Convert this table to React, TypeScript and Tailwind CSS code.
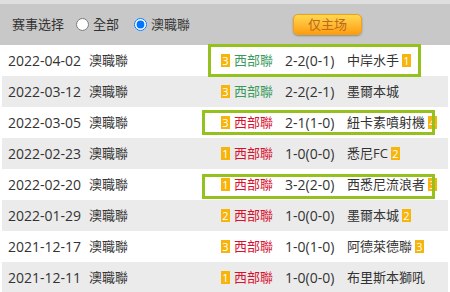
type Match = {
    date: string
    homeRank: string
    homeColor: string
    score: string
    away: string
    awayRank?: string
    box?: string
}

const matches: Match[] = [
    { date: '2022-04-02', homeRank: '3', homeColor: 'text-[#3a9a5c]', score: '2-2(0-1)', away: '中岸水手', awayRank: '1', box: 'left-[-13px] top-[-1px] w-[213px] h-[33px]' },
    { date: '2022-03-12', homeRank: '3', homeColor: 'text-[#3a9a5c]', score: '2-2(2-1)', away: '墨爾本城' },
    { date: '2022-03-05', homeRank: '3', homeColor: 'text-[#d8112f]', score: '2-1(1-0)', away: '紐卡素噴射機', awayRank: '4', box: 'left-[-19px] top-[3px] w-[233px] h-[25px]' },
    { date: '2022-02-23', homeRank: '1', homeColor: 'text-[#d8112f]', score: '1-0(0-0)', away: '悉尼FC', awayRank: '2' },
    { date: '2022-02-20', homeRank: '1', homeColor: 'text-[#d8112f]', score: '3-2(2-0)', away: '西悉尼流浪者', awayRank: '3', box: 'left-[-19px] top-[5px] w-[233px] h-[25px]' },
    { date: '2022-01-29', homeRank: '2', homeColor: 'text-[#d8112f]', score: '1-0(0-0)', away: '墨爾本城', awayRank: '2' },
    { date: '2021-12-17', homeRank: '3', homeColor: 'text-[#d8112f]', score: '1-0(1-0)', away: '阿德萊德聯', awayRank: '3' },
    { date: '2021-12-11', homeRank: '1', homeColor: 'text-[#d8112f]', score: '1-0(0-0)', away: '布里斯本獅吼' },
]

const Badge = ({ n, className = '' }: { n: string; className?: string }) => (
    <span className={`flex w-[9px] h-[13px] items-center justify-center bg-[#f7b40a] text-white text-[11px] leading-none ${className}`}>
        {n}
    </span>
)

const Row = ({ m, i }: { m: Match; i: number }) => (
    <div className={`flex h-[31px] items-center mx-[2px] ${i % 2 === 1 ? 'bg-[#ebebeb]' : 'bg-white'}`}>
        <div className="w-[87px] pl-[6px] text-[14px]">{m.date}</div>
        <div className="w-[132px]">澳職聯</div>
        <div className="relative flex self-stretch items-center">
            {m.box && <div className={`absolute border-[3px] border-[#95c11f] ${m.box}`} />}
            <Badge n={m.homeRank} />
            <span className={`ml-[4px] w-[39px] ${m.homeColor}`}>西部聯</span>
            <span className="ml-[12px] w-[62px] text-[14px]">{m.score}</span>
            <span className="whitespace-nowrap">{m.away}</span>
            {m.awayRank && <Badge n={m.awayRank} className="ml-[3px]" />}
        </div>
    </div>
)

export default function App() {
    return (
        <div
            className="w-[450px] h-[292px] overflow-hidden bg-white text-[13px] text-[#333]"
            style={{ fontFamily: '"Open Sans", "Noto Sans CJK TC", sans-serif' }}
        >
            <div className="h-[4px] bg-[#dedede]" />
            <div className="flex h-[41px] items-center bg-[#c8c8c8] pl-[12px]">
                <span>赛事选择</span>
                <label className="flex items-center ml-[12px]">
                    <input type="radio" name="scope" className="m-0 w-[13px] h-[13px]" />
                    <span className="ml-[4px]">全部</span>
                </label>
                <label className="flex items-center ml-[15px]">
                    <input type="radio" name="scope" defaultChecked className="m-0 w-[13px] h-[13px]" />
                    <span className="ml-[4px]">澳職聯</span>
                </label>
                <button className="ml-[103px] w-[69px] h-[21px] rounded-[5px] border border-[#eda21a] bg-gradient-to-b from-[#ffd84e] to-[#ff9d05] text-[#bb6b1c] text-[13px] leading-none shadow-[0_1px_2px_rgba(0,0,0,0.3)]">
                    仅主场
                </button>
            </div>
            {matches.map((m, i) => (
                <Row key={m.date} m={m} i={i} />
            ))}
        </div>
    )
}
